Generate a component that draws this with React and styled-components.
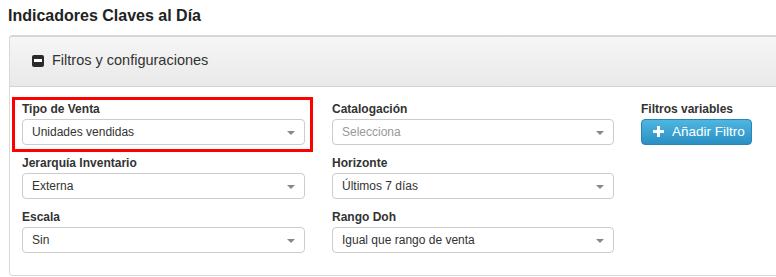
import React from 'react';
import styled, { createGlobalStyle } from 'styled-components';

const GlobalStyle = createGlobalStyle`
  html, body {
    margin: 0;
    padding: 0;
    background: #ffffff;
    overflow: hidden;
  }
  body {
    font-family: 'Liberation Sans', Arial, sans-serif;
    color: #333333;
  }
`;

const Page = styled.div`
  padding: 7px 0 0 8px;
  width: 790px;
`;

const Title = styled.h1`
  margin: 0 0 10px;
  font-size: 16px;
  line-height: 18px;
  font-weight: bold;
  color: #222222;
`;

const Panel = styled.section`
  margin-left: 1px;
  border: 1px solid #d8d8d8;
  border-top: 2px solid #d6d6d6;
  border-radius: 4px;
  background: #ffffff;
`;

const PanelHeader = styled.div`
  height: 50px;
  box-sizing: border-box;
  display: flex;
  align-items: center;
  gap: 8px;
  padding: 0 0 3px 22px;
  background: linear-gradient(#f6f6f6, #e9e9e9);
  border-bottom: 1px solid #d4d4d4;
  border-radius: 3px 3px 0 0;
  font-size: 14.5px;
  color: #333333;
`;

const MinusIcon = styled.span`
  width: 12px;
  height: 12px;
  border-radius: 2px;
  background: #2b2b2b;
  display: flex;
  align-items: center;
  justify-content: center;
  margin-top: 1px;

  &::before {
    content: '';
    width: 8px;
    height: 3px;
    background: #ffffff;
  }
`;

const PanelBody = styled.div`
  display: grid;
  grid-template-columns: 283px 282px 200px;
  column-gap: 27px;
  padding: 14px 0 22px 12px;
`;

const Column = styled.div`
  display: flex;
  flex-direction: column;
  gap: 10px;
`;

const Field = styled.div`
  position: relative;
  display: flex;
  flex-direction: column;
  gap: 2px;

  ${({ highlighted }) => highlighted && `
    &::after {
      content: '';
      position: absolute;
      top: -4px;
      left: -10px;
      right: -8px;
      bottom: -7px;
      border: 3px solid #ff0000;
      pointer-events: none;
    }
  `}
`;

const Label = styled.label`
  font-size: 12px;
  line-height: 16px;
  font-weight: bold;
  color: #333333;
`;

const Select = styled.div`
  height: 26px;
  box-sizing: border-box;
  border: 1px solid #cccccc;
  border-radius: 4px;
  background: #ffffff;
  display: flex;
  align-items: center;
  justify-content: space-between;
  padding: 0 9px 0 9px;
  font-size: 12px;
  color: ${({ placeholder }) => (placeholder ? '#999999' : '#333333')};
`;

const Caret = styled.span`
  width: 0;
  height: 0;
  border-left: 4px solid transparent;
  border-right: 4px solid transparent;
  border-top: 4px solid #888888;
  margin-top: 1px;
`;

const AddButton = styled.button`
  width: 111px;
  height: 26px;
  box-sizing: border-box;
  border: 1px solid #2486b9;
  border-radius: 4px;
  background: linear-gradient(#4fb6e1, #2a90c4);
  color: #ffffff;
  font-family: 'Liberation Sans', Arial, sans-serif;
  font-size: 13.5px;
  display: flex;
  align-items: center;
  justify-content: flex-start;
  gap: 8px;
  padding: 0 0 1px 11px;
`;

const PlusIcon = () => (
  <svg width="11" height="11" viewBox="0 0 11 11">
    <rect x="4" y="0" width="3" height="11" fill="#ffffff" />
    <rect x="0" y="4" width="11" height="3" fill="#ffffff" />
  </svg>
);

const SelectField = ({ label, value, placeholder, highlighted }) => (
  <Field highlighted={highlighted}>
    <Label>{label}</Label>
    <Select placeholder={placeholder}>
      <span>{value}</span>
      <Caret />
    </Select>
  </Field>
);

const App = () => (
  <Page>
    <GlobalStyle />
    <Title>Indicadores Claves al Día</Title>
    <Panel>
      <PanelHeader>
        <MinusIcon />
        Filtros y configuraciones
      </PanelHeader>
      <PanelBody>
        <Column>
          <SelectField label="Tipo de Venta" value="Unidades vendidas" highlighted />
          <SelectField label="Jerarquía Inventario" value="Externa" />
          <SelectField label="Escala" value="Sin" />
        </Column>
        <Column>
          <SelectField label="Catalogación" value="Selecciona" placeholder />
          <SelectField label="Horizonte" value="Últimos 7 días" />
          <SelectField label="Rango Doh" value="Igual que rango de venta" />
        </Column>
        <Column>
          <Field>
            <Label>Filtros variables</Label>
            <AddButton>
              <PlusIcon />
              Añadir Filtro
            </AddButton>
          </Field>
        </Column>
      </PanelBody>
    </Panel>
  </Page>
);

export default App;
